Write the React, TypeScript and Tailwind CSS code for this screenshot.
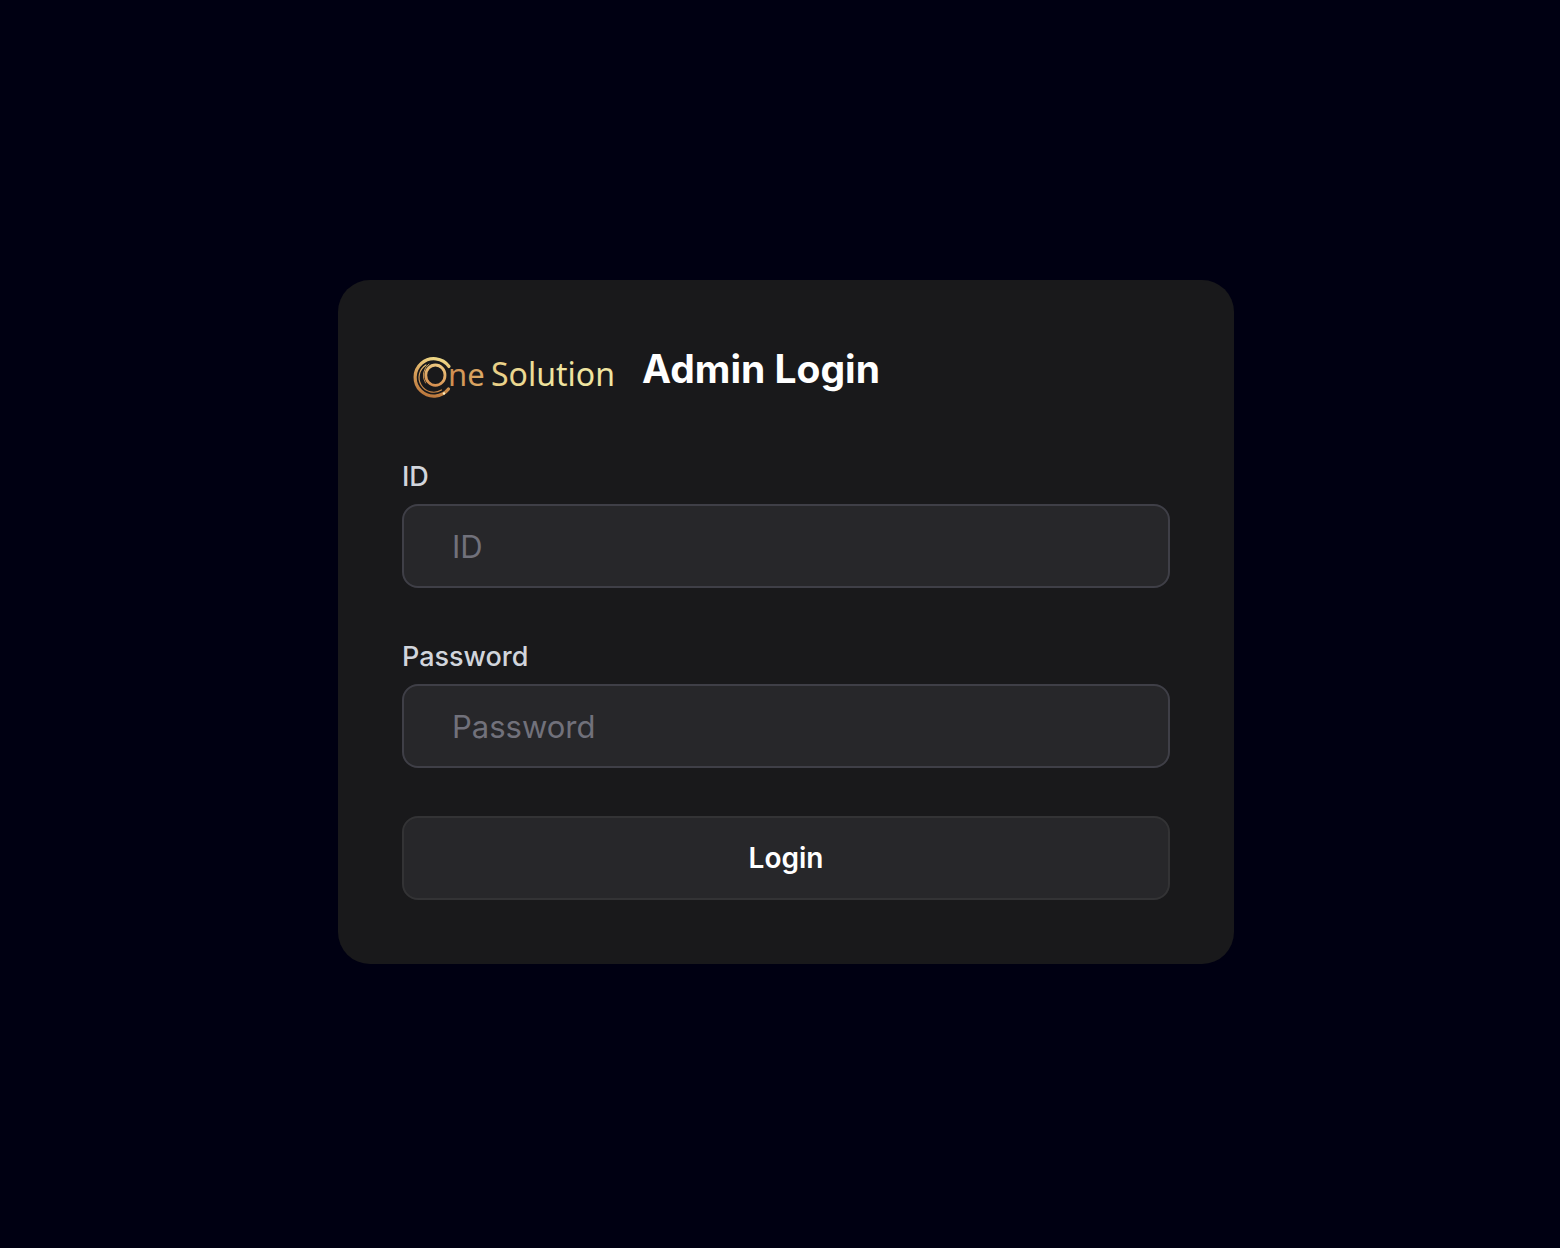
import type { FormEvent } from "react";

function Logo() {
    return (
        <svg className="h-16 w-[216px] shrink-0" viewBox="0 0 216 64" role="img" aria-label="One Solution">
            <defs>
                <linearGradient id="ring" gradientUnits="userSpaceOnUse" x1="36" y1="13" x2="26" y2="54">
                    <stop offset="0" stopColor="#f0dc8a" />
                    <stop offset="0.45" stopColor="#d9a25c" />
                    <stop offset="1" stopColor="#b9743a" />
                </linearGradient>
                <linearGradient id="letter" gradientUnits="userSpaceOnUse" x1="36" y1="19" x2="30" y2="43">
                    <stop offset="0" stopColor="#efcb82" />
                    <stop offset="1" stopColor="#d58d4e" />
                </linearGradient>
                <linearGradient id="ne" gradientUnits="userSpaceOnUse" x1="46" y1="0" x2="82" y2="0">
                    <stop offset="0" stopColor="#cf8c4e" />
                    <stop offset="1" stopColor="#dcab68" />
                </linearGradient>
                <linearGradient id="solution" gradientUnits="userSpaceOnUse" x1="88" y1="0" x2="150" y2="0">
                    <stop offset="0" stopColor="#e8cd84" />
                    <stop offset="1" stopColor="#efe5a0" />
                </linearGradient>
            </defs>
            <g fill="none" strokeLinecap="round">
                <path d="M47 22.5 A18.7 18.7 0 1 0 46.5 45" stroke="url(#ring)" strokeWidth="3.2" />
                <path d="M24 21 A14.5 14.5 0 0 0 39.5 46" stroke="url(#ring)" strokeWidth="1.2" />
                <path d="M27 20 A14 14 0 0 0 23.5 39" stroke="url(#ring)" strokeWidth="0.9" />
                <ellipse cx="33.4" cy="31.2" rx="9.6" ry="10.2" stroke="url(#letter)" strokeWidth="2.8" />
                <circle cx="42" cy="49.5" r="1.2" fill="#fff0c0" />
            </g>
            <g fontFamily="'Noto Sans', 'Open Sans', sans-serif">
                <text x="46" y="42" fontSize="31" fill="url(#ne)">ne</text>
                <text x="89" y="42" fontSize="32" fill="url(#solution)">Solution</text>
            </g>
        </svg>
    );
}

export default function AdminLoginPage() {
    const handleSubmit = (e: FormEvent) => e.preventDefault();

    return (
        <main className="min-h-screen flex items-center justify-center bg-[#000012] px-4 pl-7 pb-1 font-[Inter,sans-serif]">
            <div className="max-w-4xl w-full bg-[#19191b] rounded-[32px] p-16">
                <div className="flex items-start gap-6 mb-12">
                    <Logo />
                    <h1 className="text-[39px] leading-[50px] font-bold text-white">Admin Login</h1>
                </div>

                <form onSubmit={handleSubmit}>
                    <label htmlFor="admin-id" className="block text-[27px] leading-[42px] mb-1.5 font-medium text-gray-300">
                        ID
                    </label>
                    <input
                        id="admin-id"
                        type="text"
                        placeholder="ID"
                        className="block w-full h-[84px] mb-12 px-12 rounded-2xl border-2 border-zinc-700 bg-zinc-800 text-[31px] text-white placeholder:text-zinc-500"
                    />

                    <label htmlFor="admin-password" className="block text-[27px] leading-[42px] mb-1.5 font-medium text-gray-300">
                        Password
                    </label>
                    <input
                        id="admin-password"
                        type="password"
                        placeholder="Password"
                        className="block w-full h-[84px] mb-12 px-12 rounded-2xl border-2 border-zinc-700 bg-zinc-800 text-[31px] text-white placeholder:text-zinc-500"
                    />

                    <button
                        type="submit"
                        className="block w-full h-[84px] rounded-2xl border-2 border-[#333335] bg-zinc-800 text-[28px] font-semibold text-white"
                    >
                        Login
                    </button>
                </form>
            </div>
        </main>
    );
}
